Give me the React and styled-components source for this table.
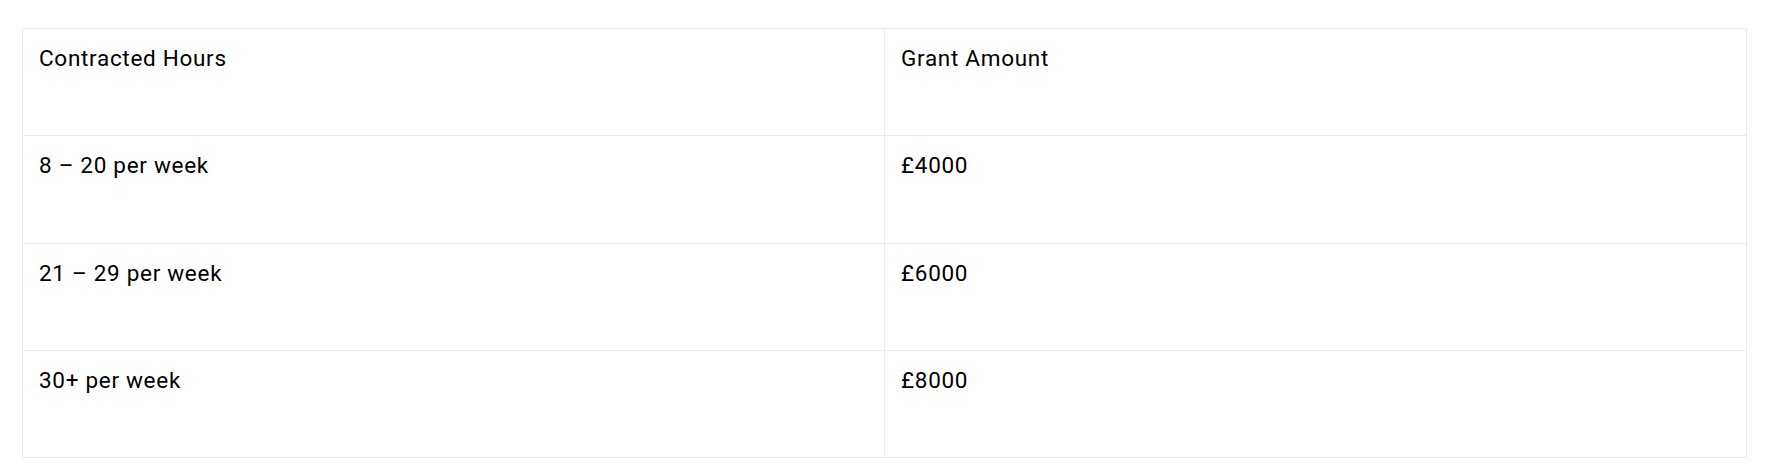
import React from "react";
import styled, { createGlobalStyle } from "styled-components";

const Global = createGlobalStyle`
  html, body { margin: 0; padding: 0; background: #ffffff; }
  body { font-family: Roboto, "Noto Sans", Arial, sans-serif; color: #000000; }
`;

const Page = styled.div`
  padding: 28px 19px 14px 22px;
`;

const Table = styled.table`
  width: 1725px;
  border-collapse: collapse;
  table-layout: fixed;
`;

const Cell = styled.td`
  width: 50%;
  height: 107.25px;
  box-sizing: border-box;
  border: 1px solid #ebebeb;
  padding: 13px 16px;
  vertical-align: top;
  font-size: 22.5px;
  letter-spacing: 0.7px;
  line-height: 33px;
  font-weight: 400;
  color: #000000;
`;

const rows = [
  ["Contracted Hours", "Grant Amount"],
  ["8 – 20 per week", "£4000"],
  ["21 – 29 per week", "£6000"],
  ["30+ per week", "£8000"],
];

export default function App() {
  return (
    <>
      <Global />
      <Page>
        <Table>
          <tbody>
            {rows.map((r, i) => (
              <tr key={i}>
                <Cell>{r[0]}</Cell>
                <Cell>{r[1]}</Cell>
              </tr>
            ))}
          </tbody>
        </Table>
      </Page>
    </>
  );
}
